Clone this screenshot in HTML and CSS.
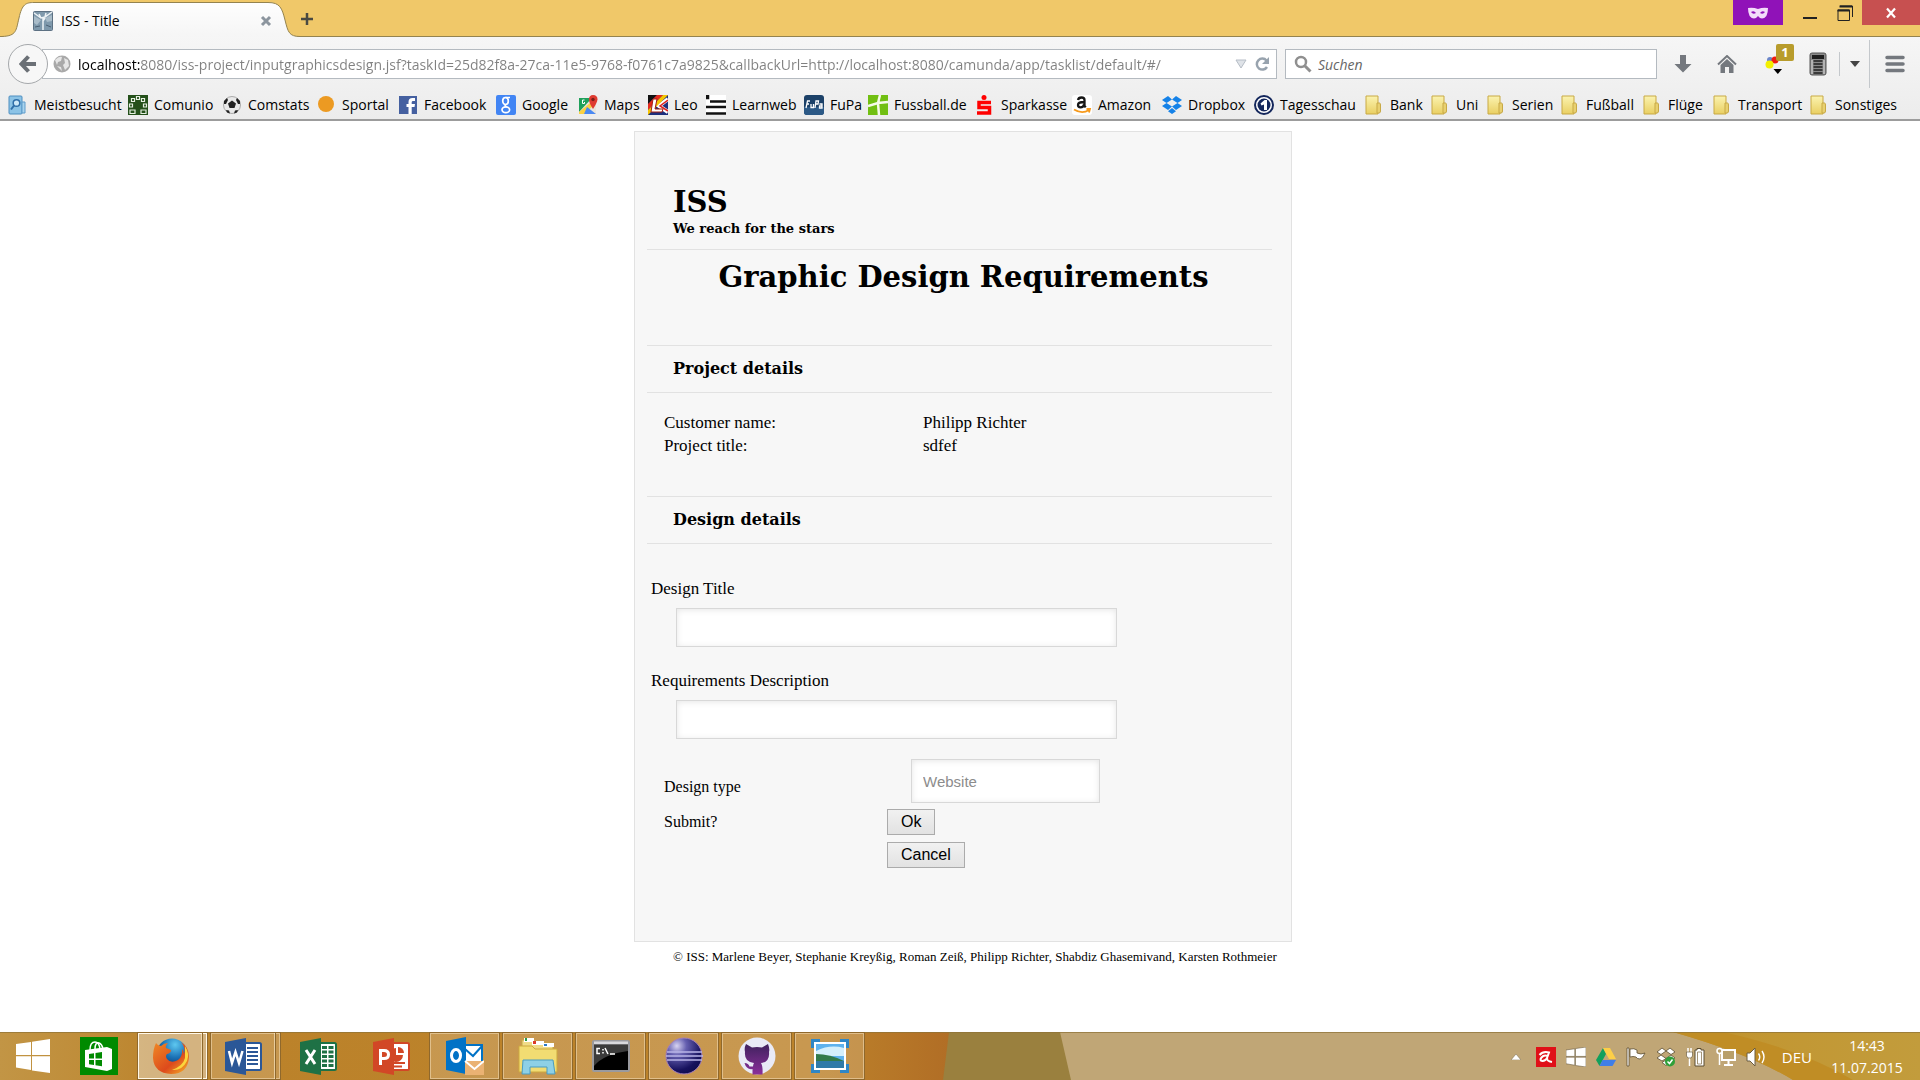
FILE: index.html
```
<!DOCTYPE html>
<html lang="de">
<head>
<meta charset="utf-8">
<title>ISS - Title</title>
<link rel="stylesheet" href="styles.css">
</head>
<body>
<svg class="defs" aria-hidden="true">
  <defs>
    <linearGradient id="folderFill" x1="0" y1="0" x2="0" y2="1"><stop offset="0" stop-color="#fbf3b0"/><stop offset="1" stop-color="#e9cf62"/></linearGradient>
    <linearGradient id="tabFill" x1="0" y1="0" x2="0" y2="1"><stop offset="0" stop-color="#fefefe"/><stop offset="1" stop-color="#f5f5f5"/></linearGradient>
    <radialGradient id="orb" cx=".3" cy=".22" r=".9"><stop offset="0" stop-color="#d8d4f2"/><stop offset=".3" stop-color="#655fb0"/><stop offset=".75" stop-color="#17125e"/><stop offset="1" stop-color="#0d0a48"/></radialGradient>
    <radialGradient id="globe" cx=".6" cy=".2" r=".8"><stop offset="0" stop-color="#5ec8f0"/><stop offset=".5" stop-color="#1c74b8"/><stop offset="1" stop-color="#0b2c66"/></radialGradient>
    <linearGradient id="fox" x1="0" y1="0" x2="1" y2="1"><stop offset="0" stop-color="#f08a24"/><stop offset=".6" stop-color="#dd4a1c"/><stop offset="1" stop-color="#f7b928"/></linearGradient>
    <linearGradient id="octo" x1="0" y1="0" x2="0" y2="1"><stop offset="0" stop-color="#40225e"/><stop offset="1" stop-color="#8a2f9a"/></linearGradient>
    <symbol id="folder" viewBox="0 0 18 20"><path d="M1 1h12v18H1z" fill="url(#folderFill)" stroke="#c8a945"/><path d="M12 8h2.500q1 0 1 2v6q0 2-1.500 2h-2z" fill="#e8d070" stroke="#c8a945"/></symbol>
    <symbol id="win" viewBox="0 0 34 34"><path d="M0 5 15 3v13H0zM16 2.700 34 0v16H16zM0 17.300h15V31L0 28.500zM16 17.300h18V34l-18-2.600z"/></symbol>
  </defs>
</svg>

<header class="chrome">
  <div class="titlebar">
    <div class="tab">
      <svg class="tab-shape" viewBox="0 0 300 37"><path d="M2 36.500C17 36 16 30 19 18 22 4 26 2.500 34 2.500H268C280 2.500 282 8 285 20 288 32 289 36.500 300 36.500V38H2z" fill="url(#tabFill)" stroke="#94834f"/></svg>
      <svg class="favicon" viewBox="0 0 20 20"><rect x=".5" y=".5" width="19" height="19" rx="1" fill="#7f99ac" stroke="#5d7183"/><path d="M1 5 8 9 4 14 1 12zM12 7l7-3v6l-5 1z" fill="#a9bcc9"/><path d="m1 2 7 5 4-1 7-5M6 3l2 4M13 2l-1 4M10 7v12M12 7l-2 3" fill="none" stroke="#eef3f6" stroke-width="1.500"/><path d="M2 16l5-1M13 14l5 2" stroke="#4b6073"/></svg>
      <span class="tab-title">ISS - Title</span>
      <button class="tab-close" type="button" aria-label="Tab schließen"><svg viewBox="0 0 12 12" width="12" height="12"><path d="m2 2 8 8M10 2l-8 8" stroke="#8c959e" stroke-width="3"/></svg></button>
    </div>
    <button class="new-tab" type="button" aria-label="Neuer Tab"><svg viewBox="0 0 14 14" width="14" height="14"><path d="M7 1v12M1 7h12" stroke="#4a4a42" stroke-width="2.500"/></svg></button>
    <div class="window-buttons">
      <span class="private"><svg viewBox="0 0 20 12" width="20" height="12"><path d="M0 1q5-1 10 1 5-2 10-1 0 10-6 10.500-2 0-4-2.500-2 2.500-4 2.500Q0 11 0 1z" fill="#f3dcfa"/><path d="M3 5q3-2 5 1-3 2-5-1zM17 5q-3-2-5 1 3 2 5-1z" fill="#9012b8"/></svg></span>
      <button type="button" aria-label="Minimieren"><svg viewBox="0 0 16 16" width="16" height="16"><path d="M1 13h14" stroke="#222" stroke-width="2"/></svg></button>
      <button type="button" aria-label="Verkleinern"><svg viewBox="0 0 16 16" width="16" height="16"><path d="M3 1h12.500v11M1 5h11.500v10.500H1z" fill="none" stroke="#222"/><path d="M2.500 1.500H15M.5 5.500h12" stroke="#222" stroke-width="2"/></svg></button>
      <button class="close" type="button" aria-label="Schließen"><svg viewBox="0 0 12 12" width="12" height="12"><path d="m2 1.500 8 9M10 1.500l-8 9" stroke="#fff" stroke-width="2.200"/></svg></button>
    </div>
  </div>

  <div class="navbar">
    <button class="back" type="button" aria-label="Zurück"><svg viewBox="0 0 18 18" width="18" height="18"><path d="M9.500 1.500 2.500 9l7 7.500M3 9h14" fill="none" stroke="#6b7076" stroke-width="4"/></svg></button>
    <div class="urlbar">
      <svg viewBox="0 0 18 18" width="18" height="18"><circle cx="9" cy="9" r="8.500" fill="#a9a9a9"/><path d="M2 5q4-4 7-3l-1 4-3 1-1 3zM11 3l4 2 1 6-4 4-2-5 2-2zM4 11l4 1 1 4z" fill="#e6e6e6"/></svg>
      <input class="url" type="text" aria-label="Adresse" value="localhost:8080/iss-project/inputgraphicsdesign.jsf?taskId=25d82f8a-27ca-11e5-9768-f0761c7a9825&amp;callbackUrl=http://localhost:8080/camunda/app/tasklist/default/#/">
      <svg viewBox="0 0 12 10" width="12" height="10"><path d="M1 1h10L6 9z" fill="#dfe3e8" stroke="#b6bdc6"/></svg>
      <svg viewBox="0 0 16 16" width="16" height="16"><path d="M12.500 4.500A5.500 5.500 0 1 0 13 11" fill="none" stroke="#98a3ae" stroke-width="2.500"/><path d="M15 1v7H8z" fill="#98a3ae"/></svg>
    </div>
    <div class="searchbar">
      <svg viewBox="0 0 18 18" width="18" height="18"><circle cx="7" cy="7" r="5" fill="none" stroke="#8f8f8f" stroke-width="2.500"/><path d="m11 11 5.500 5.500" stroke="#8f8f8f" stroke-width="3"/></svg>
      <input class="search" type="text" aria-label="Suchen" placeholder="Suchen">
    </div>
    <div class="tools">
      <button type="button" aria-label="Downloads"><svg viewBox="0 0 18 20" width="18" height="20"><path d="M6 1h6v9h5.500L9 18.500.5 10H6z" fill="#74787e"/></svg></button>
      <button type="button" aria-label="Startseite"><svg viewBox="0 0 20 18" width="20" height="18"><path d="m1 9.500 9-8.500 9 8.500" fill="none" stroke="#74787e" stroke-width="2"/><path d="m3.500 10 6.500-6 6.500 6v8H12v-6H8v6H3.500z" fill="#74787e"/></svg></button>
      <button class="addon" type="button" aria-label="Erweiterung"><svg viewBox="0 0 20 20" width="20" height="20"><circle cx="7" cy="6" r="3" fill="#6b86c9"/><circle cx="12" cy="6" r="3.500" fill="#f01d10"/><circle cx="6.500" cy="10.500" r="4" fill="#f3f000"/><path d="M10.500 15H19l-4.200 5z" fill="#000"/></svg><span class="count">1</span></button>
      <button type="button" aria-label="Leseliste"><svg viewBox="0 0 18 24" width="18" height="24"><rect x="1" y="1" width="16" height="22" rx="2" fill="#8a8a8a" stroke="#555"/><path d="M3 3h12v4H3z" fill="#1e1e1e"/><path d="M4.500 9h9M4.500 12h9M4.500 15h9M4.500 18h9M4.500 21h9" stroke="#222" stroke-width="1.500"/><path d="M3 8v14M15 8v14" stroke="#ddd"/></svg></button>
      <button class="split" type="button" aria-label="Mehr"><svg viewBox="0 0 10 6" width="10" height="6"><path d="M0 0h10L5 6z" fill="#444"/></svg></button>
      <button class="menu" type="button" aria-label="Menü"><svg viewBox="0 0 20 18" width="20" height="18"><path d="M2 2.500h16M2 9h16M2 15.500h16" stroke="#74787e" stroke-width="3.500" stroke-linecap="round"/></svg></button>
    </div>
  </div>

  <nav class="bookmarks" aria-label="Lesezeichen">
    <a href="#"><svg viewBox="0 0 20 20"><rect x="1" y="1" width="13" height="18" rx="1" fill="#8cc3e6" stroke="#4f8fc0"/><path d="M14 7h3v11h-3z" fill="#a9d4ee" stroke="#5e9ccb"/><circle cx="8.500" cy="8" r="3.300" fill="#cde8f8" stroke="#2f6ea8" stroke-width="1.500"/><path d="m6 10.500-3 4" stroke="#2f6ea8" stroke-width="2"/></svg>Meistbesucht</a>
    <a href="#"><svg viewBox="0 0 20 20"><path d="M0 0h20v20H0z" fill="#24501a"/><g fill="#24501a" stroke="#e4eee0" stroke-width="1.200"><path d="M8.500 1.500h3v3h-3zM3.500 3.500h3v3h-3zM13.500 3.500h3v3h-3zM1.500 9h3v3h-3zM15.500 9h3v3h-3zM2 15h5v3.500H2zM13 15h5v3.500h-5z"/></g></svg>Comunio</a>
    <a href="#"><svg viewBox="0 0 20 20"><circle cx="10" cy="10" r="8.500" fill="#e9e9e9" stroke="#aaa"/><path d="m10 5.500 4 3-1.500 4.500h-5L6 8.500zM2 6l3-3 1 2-2 4H2zM18 6l-3-3-1 2 2 4h2zM4 15l3 .500 1 3-3-1zM16 15l-3 .500-1 3 3-1z" fill="#222"/></svg>Comstats</a>
    <a href="#"><svg viewBox="0 0 20 20"><circle cx="10" cy="9" r="8" fill="#ec9a22"/></svg>Sportal</a>
    <a href="#"><svg viewBox="0 0 20 20"><path d="M1 1h18v18H1z" fill="#4560a0"/><path d="M10.500 19v-7H8.500V9h2V7q0-4 4-4h2.500v3h-2q-1.300 0-1.300 1.300V9H17l-.5 3h-2.800v7z" fill="#fff"/></svg>Facebook</a>
    <a href="#"><svg viewBox="0 0 20 20"><rect width="20" height="20" rx="2" fill="#4285f4"/><g fill="none" stroke="#fff" stroke-width="1.700"><ellipse cx="9.500" cy="6" rx="2.800" ry="3.500"/><path d="M9.500 2.500H14M10 9.500q-2 1 .500 2.500"/><ellipse cx="9.800" cy="14.800" rx="3.800" ry="2.900"/></g></svg>Google</a>
    <a href="#"><svg viewBox="0 0 20 20"><path d="M1 3h17v16H1z" fill="#e9e5dc"/><path d="M1 3h13L1 17z" fill="#1fa05a"/><path d="m1 17 11-9 3 3-9 8H1z" fill="#fbd142"/><path d="m9 12 9 7H6z" fill="#4a89f3"/><path d="M15 0q4.500 0 4.500 4.500Q19 8 15 14q-4-6-4-9.500Q11 0 15 0z" fill="#df3b31"/><circle cx="15" cy="4.500" r="1.700" fill="#7c1f1a"/><path d="M6.500 5H4.500v3.500h2V7" fill="none" stroke="#fff"/></svg>Maps</a>
    <a href="#"><svg viewBox="0 0 20 20"><path d="M0 0h20v20H0z" fill="#1d2f7d"/><path d="m20 4-9 7 9 6" stroke="#fff" stroke-width="4" fill="none"/><path d="m20 5-8 6 8 5" fill="none" stroke="#d22" stroke-width="1.500"/><path d="M0 0h9L0 9z" fill="#111"/><path d="M9 0h6L0 15V9z" fill="#e42a1d"/><path d="M15 0h5L0 20v-5z" fill="#f6c400"/><path d="m5 4-2 13h11l1-3H7l2-10z" fill="#fff" stroke="#a42015"/></svg>Leo</a>
    <a href="#"><svg viewBox="0 0 20 20"><path d="M0 0h20v20H0z" fill="#fff"/><path d="M0 0h2v3H0zM4 6.500h16M0 12h20M0 18.500h20" stroke="#111" stroke-width="2.500"/></svg>Learnweb</a>
    <a href="#"><svg viewBox="0 0 20 20"><rect width="20" height="20" rx="3" fill="#1c4168"/><path d="M0 12h20v5q0 3-3 3H3q-3 0-3-3z" fill="#2c5986"/><path d="M2 13 3.500 6H6M3 9h2M7 9v3.500h2.500V9M11 13l1-7h2.500l-.5 3h-2M15.500 9H18v4h-2.500v-2H18" fill="none" stroke="#fff" stroke-width="1.300"/></svg>FuPa</a>
    <a href="#"><svg viewBox="0 0 20 20"><path d="M0 0h20v20H0z" fill="#71bf12"/><path d="m12 0-2 8 1 12M0 11l10-3 10-1" fill="none" stroke="#f5fbe9" stroke-width="2.500"/></svg>Fussball.de</a>
    <a href="#"><svg viewBox="0 0 20 20"><circle cx="9" cy="2.500" r="2.500" fill="#f00"/><path d="M16 7.500H4v5h10.500v5.500H2" fill="none" stroke="#f00" stroke-width="3.500"/></svg>Sparkasse</a>
    <a href="#"><svg viewBox="0 0 20 20"><rect width="20" height="20" rx="3" fill="#fff"/><path d="M6 5q.500-2.500 3.500-2.500T12.500 5v6l1.300 1.300M12 7Q6 7 6 10q0 2.300 2.500 2.300 3 0 3.500-2.800" fill="none" stroke="#151515" stroke-width="2.300"/><path d="M2 14.500q8 5 15 .500M14.500 14h3.500l-1 3.500" fill="none" stroke="#f79a1c" stroke-width="1.800"/></svg>Amazon</a>
    <a href="#"><svg viewBox="0 0 20 20"><path d="m6 1 4 3.500L4.500 8 0 5zM14 1l-4 3.500L15.500 8 20 5zM0 11l4.500-3 5.500 3.500L6 15zM20 11l-4.500-3-5.500 3.500 4 3.500zM10 13l4 3.200L10 19l-4-2.800z" fill="#1582e8"/></svg>Dropbox</a>
    <a href="#"><svg viewBox="0 0 20 20"><circle cx="10" cy="10" r="9" fill="#fff" stroke="#14275c" stroke-width="2"/><circle cx="10" cy="10" r="6.500" fill="#14275c"/><path d="M6.500 8.500 10.500 5H13v10h-3V9.500l-2.500 1z" fill="#fff"/></svg>Tagesschau</a>
    <a href="#"><svg viewBox="0 0 18 20"><use href="#folder"/></svg>Bank</a>
    <a href="#"><svg viewBox="0 0 18 20"><use href="#folder"/></svg>Uni</a>
    <a href="#"><svg viewBox="0 0 18 20"><use href="#folder"/></svg>Serien</a>
    <a href="#"><svg viewBox="0 0 18 20"><use href="#folder"/></svg>Fußball</a>
    <a href="#"><svg viewBox="0 0 18 20"><use href="#folder"/></svg>Flüge</a>
    <a href="#"><svg viewBox="0 0 18 20"><use href="#folder"/></svg>Transport</a>
    <a href="#"><svg viewBox="0 0 18 20"><use href="#folder"/></svg>Sonstiges</a>
  </nav>
</header>

<main class="page">
  <div class="column">
    <form class="card">
      <div class="brand">
        <h1>ISS</h1>
        <p>We reach for the stars</p>
      </div>
      <h2 class="title">Graphic Design Requirements</h2>
      <h3 class="section">Project details</h3>
      <table class="details">
        <tr><th scope="row">Customer name:</th><td>Philipp Richter</td></tr>
        <tr><th scope="row">Project title:</th><td>sdfef</td></tr>
      </table>
      <h3 class="section">Design details</h3>
      <div class="fields">
        <div class="field"><label for="design-title">Design Title</label><input id="design-title" type="text"></div>
        <div class="field"><label for="requirements">Requirements Description</label><input id="requirements" type="text"></div>
      </div>
      <div class="choices">
        <label for="design-type">Design type</label>
        <select id="design-type"><option>Website</option></select>
        <span class="prompt">Submit?</span>
        <div class="actions"><button type="button">Ok</button><button type="button">Cancel</button></div>
      </div>
    </form>
    <footer>© ISS: Marlene Beyer, Stephanie Kreyßig, Roman Zeiß, Philipp Richter, Shabdiz Ghasemivand, Karsten Rothmeier</footer>
  </div>
</main>

<div class="taskbar">
  <svg class="wallpaper" viewBox="0 0 1920 48" preserveAspectRatio="none">
    <defs><linearGradient id="wood"><stop offset="0" stop-color="#c29545"/><stop offset=".1" stop-color="#bf8c38"/><stop offset=".18" stop-color="#bb822a"/><stop offset=".85" stop-color="#bd832b"/><stop offset="1" stop-color="#b06c25"/></linearGradient>
    <linearGradient id="gold"><stop offset="0" stop-color="#c0902c"/><stop offset=".4" stop-color="#c29733"/><stop offset="1" stop-color="#c29c3c"/></linearGradient></defs>
    <path d="M0 0h960v48H0z" fill="url(#wood)"/>
    <path d="M949 0h125v48H943z" fill="#9a803e"/>
    <path d="M1060 0h860v48H1071z" fill="#c0a676"/>
    <path d="M1673 0h247v48h-127Q1750 22 1673 0z" fill="url(#gold)"/>
    <path d="M1673 0h50q80 18 130 48h-60Q1750 22 1673 0z" fill="#c08d25"/>
    <path d="M0 .5h1920" stroke="#8d7238" stroke-opacity=".7"/>
  </svg>
  <div class="apps">
    <button class="start" type="button" aria-label="Start"><svg width="34" height="34" fill="#fff"><use href="#win"/></svg></button>
    <button class="store" type="button" aria-label="Store"><svg viewBox="0 0 38 38" width="38" height="38"><path d="M0 0h38v38H0z" fill="#008a00"/><path d="M10 13Q10 5 15 5q4 0 5 7M15 12q0-7 4-6 3 1 4 6" fill="none" stroke="#fff" stroke-width="1.500"/><path d="m5 13 22-3 5 2v20l-5 2-22-4z" fill="#fff"/><path d="m9 17 5-.7v5.200H9zM15.500 16l6.500-1v6.500h-6.500zM9 23h5v5l-5-.7zM15.500 23H22v6.200l-6.500-1z" fill="#008a00"/></svg></button>
    <button class="open active stacked" type="button" aria-label="Firefox"><svg viewBox="0 0 38 38" width="38" height="38"><circle cx="20" cy="17" r="15.500" fill="url(#globe)"/><path d="M4 6q2 3 5 3 3-3 7-3-3 3-2 5l5 2q0 3-4 4-2 2 0 5 4 5 11 1 5-4 4-11 2 2 2 5 2-6-3-12 8 5 8 15-1 17-18 17Q2 36 1 21 1 12 4 6z" fill="url(#fox)"/><path d="M33 9q5 8 2 15-5 10-15 9 11-4 13-12z" fill="#fbd53d"/></svg></button>
    <button class="open stacked" type="button" aria-label="Word"><svg viewBox="0 0 37 37" width="37" height="37"><rect x="18" y="5" width="18" height="27" rx="1.500" fill="#fff" stroke="#2b5797" stroke-width="2"/><path d="M22 10h11M22 14h11M22 18h11M22 22h11M22 26h11" stroke="#2b5797" stroke-width="2"/><path d="m0 4 21-4v37L0 33z" fill="#2b5797"/><path d="m4 13 3 12 3.500-11L14 25l3.500-12" fill="none" stroke="#fff" stroke-width="2.500"/></svg></button>
    <button type="button" aria-label="Excel"><svg viewBox="0 0 37 37" width="37" height="37"><rect x="18" y="5" width="18" height="27" rx="1.500" fill="#fff" stroke="#1e7145" stroke-width="2"/><path d="M22 9.500h5M28.500 9.500h5M22 14h5M28.500 14h5M22 18.500h5M28.500 18.500h5M22 23h5M28.500 23h5M22 27.500h5M28.500 27.500h5" stroke="#1e7145" stroke-width="3"/><path d="m0 4 21-4v37L0 33z" fill="#1e7145"/><path d="m6 12 9 14M15 12 6 26" stroke="#fff" stroke-width="3"/></svg></button>
    <button type="button" aria-label="PowerPoint"><svg viewBox="0 0 37 37" width="37" height="37"><rect x="18" y="5" width="18" height="27" rx="1.500" fill="#fff" stroke="#d24726" stroke-width="2"/><path d="M23 10v7h7a7 7 0 1 1-7-7z" fill="#d24726"/><path d="M25 9a6 6 0 0 1 6 6h-6z" fill="#d24726"/><path d="M21 25h11M21 28.500h8" stroke="#d24726" stroke-width="2"/><path d="m0 4 21-4v37L0 33z" fill="#d24726"/><path d="M7.500 27V12.500H11q4.500 0 4.500 4t-4.500 4H8" fill="none" stroke="#fff" stroke-width="3"/></svg></button>
    <button class="open" type="button" aria-label="Outlook"><svg viewBox="0 0 38 38" width="38" height="38"><path d="M19 8h17v17H19z" fill="#fff" stroke="#0072c6" stroke-width="2"/><path d="m19 12 8 7 9-10" fill="none" stroke="#0072c6" stroke-width="2"/><path d="m0 4 20-4v37L0 33z" fill="#0072c6"/><ellipse cx="10" cy="18.500" rx="4.500" ry="6" fill="none" stroke="#fff" stroke-width="3"/><path d="M19 24h19v14H19z" fill="#eab273"/><path d="m19 24 9.500 8 9.500-8" fill="none" stroke="#fff" stroke-width="2"/></svg></button>
    <button class="open" type="button" aria-label="Explorer"><svg viewBox="0 0 40 38" width="40" height="38"><path d="M4 3h12l2 3h17v8H4z" fill="#f0dc88" stroke="#c7a647"/><path d="M6 1h10v4H6zM14 4h12v4H14zM25 6h11v4H25z" fill="#fff"/><path d="M7 1h2v3H7z" fill="#2a9a4a"/><path d="M15 4h3v3h-3z" fill="#dd3a2a"/><path d="M26 7h3v2h-3z" fill="#2a7ac8"/><path d="M1 9h13l3 3h22v23H1z" fill="#f2dc72" stroke="#cda93f"/><path d="M5 23h30l2 14h-8v-7H12v7H4z" fill="#8ed0e6" stroke="#4a9cc0"/></svg></button>
    <button class="open" type="button" aria-label="Eingabeaufforderung"><svg viewBox="0 0 38 32" width="38" height="32"><rect x="1" y="1" width="36" height="30" rx="1" fill="#000" stroke="#9a9a9e" stroke-width="2"/><path d="M2 3h34" stroke="#d8d8dc" stroke-width="3"/><path d="M2 5h34v6Q12 14 2 26z" fill="#3b3b3b"/><path d="M8 8.500H5v5h3M11 9v1.500M11 12v1.500M13 8l3 6M18 14h5" fill="none" stroke="#fff" stroke-width="1.500"/></svg></button>
    <button class="open" type="button" aria-label="Eclipse"><svg viewBox="0 0 38 38" width="38" height="38"><circle cx="19" cy="19" r="18" fill="url(#orb)" stroke="#a680b8"/><path d="M2 15h35M1 19h37M2 23h35" stroke="#b9b5e8" stroke-width="1.500"/></svg></button>
    <button class="open" type="button" aria-label="GitHub"><svg viewBox="0 0 38 38" width="38" height="38"><circle cx="19" cy="19" r="18.500" fill="#e9eaf6"/><path d="m8 7 6 3.500q5-1 10 0L30 7q2 5 1 8 1 10-8 11 2 3 1.500 11.500h-10V32q-6 1-8-6 4 0 5 3.500h3.500q0-2 1-3.500Q6 25 7 15 6 11 8 7z" fill="url(#octo)"/></svg></button>
    <button class="open" type="button" aria-label="Snipping Tool"><svg viewBox="0 0 38 34" width="38" height="34"><path d="M0 0h9v9H0zM29 0h9v9h-9zM0 25h9v9H0zM29 25h9v9h-9z" fill="#2f86c6"/><path d="M3 3h32v28H3z" fill="#fff"/><path d="M5 5h28v24H5z" fill="#5eb2ee"/><path d="M5 12q14-7 28-3v8H5z" fill="#d5effc"/><path d="M5 15q14 0 28 7v2H5z" fill="#337a4a"/><path d="M5 22h28v7H5z" fill="#2f7aa8"/></svg></button>
  </div>
  <div class="tray">
    <svg viewBox="0 0 10 6" width="10" height="6"><path d="m5 0 5 6H0z" fill="#fff" stroke="#77684a" stroke-width=".5"/></svg>
    <svg viewBox="0 0 20 20" width="20" height="20"><path d="M0 0h20v20H0z" fill="#e01018"/><path d="M3.500 8Q7 4 13 5.500L11 11q-.5 3 5 4M11.500 9Q8 7.500 5.500 10.500T6.500 14q3 0 5-3.500" fill="none" stroke="#fff" stroke-width="2"/></svg>
    <svg width="20" height="20" fill="#fff" stroke="#6b5c40"><use href="#win"/></svg>
    <svg viewBox="0 0 20 20" width="20" height="20"><path d="M7 1 0 13l3.500 6L10 7z" fill="#12a05c"/><path d="M7 1h7l6 11h-7z" fill="#fdcf47"/><path d="M6.500 13H20l-3.500 6h-13z" fill="#3f7ee8"/></svg>
    <svg viewBox="0 0 20 20" width="20" height="20"><path d="M1 1h2v18H1zM4 2q4-1 7 1v3q4 2 8 0-2 5-5 6-3 0-4-2-3-1-6 0z" fill="#fff" stroke="#5b4d30" stroke-width=".8"/></svg>
    <svg viewBox="0 0 20 20" width="20" height="20"><path d="m6 1 4 3-5 3.500L1 5zM14 1l-4 3 5 3.500L19 5zM1 11l4-3 5 3.500L6 14zM19 11l-4-3-5 3.500 4 2.500zM10 13l4 2.500-4 3-4-3z" fill="#fff" stroke="#5b4d30" stroke-width=".8"/><circle cx="14" cy="14.500" r="5" fill="#2fa03a"/><path d="m11.500 14.500 2 2 3-4" fill="none" stroke="#fff" stroke-width="1.500"/></svg>
    <svg viewBox="0 0 20 20" width="20" height="20"><path d="M2 1v5M5 1v5M3.500 10v9" stroke="#fff" stroke-width="1.500"/><path d="M.5 5h6v4l-1.500 2H2L.5 9z" fill="#fff" stroke="#5b4d30" stroke-width=".6"/><path d="M11 1.500h4v1.500h3v16H9V3h2z" fill="#fff" stroke="#5b4d30"/><path d="M11.500 5h4v12h-4z" fill="#fff" stroke="#8b7a58" stroke-width=".8"/></svg>
    <svg viewBox="0 0 20 20" width="20" height="20"><path d="M6 3h13v10H6z" fill="#b9a06a" stroke="#fff" stroke-width="2"/><path d="M12.500 14v3M8 18h9" stroke="#fff" stroke-width="2"/><circle cx="3.500" cy="4" r="2.500" fill="#b9a06a" stroke="#fff" stroke-width="1.500"/><path d="M3.500 7v11" stroke="#fff" stroke-width="1.500"/></svg>
    <svg viewBox="0 0 20 20" width="20" height="20"><path d="M1 6h3l5-5v18l-5-5H1z" fill="#fff" stroke="#6b5c40"/><path d="M12.500 6.500q2.500 3.500 0 7M16 4q4 6 0 12" fill="none" stroke="#fff" stroke-width="1.400"/></svg>
    <span class="lang">DEU</span>
    <time class="clock" datetime="2015-07-11T14:43"><span>14:43</span><span>11.07.2015</span></time>
  </div>
</div>
</body>
</html>
```
FILE: styles.css
```
* { box-sizing: border-box; }

body {
  margin: 0;
  min-height: 100vh;
  display: flex;
  flex-direction: column;
  background: #fff;
  color: #000;
  font-family: "Open Sans", "Noto Sans", sans-serif;
  font-size: 14px;
}

h1, h2, h3, p { margin: 0; }
button { margin: 0; padding: 0; border: 0; background: none; font: inherit; color: inherit; }
svg { display: block; flex: none; }
.defs { position: absolute; width: 0; height: 0; }

/* Browser window */
.chrome { background: linear-gradient(#f6f6f6 36px, #ececec 100%); border-bottom: 2px solid #9c9c9c; }

.titlebar {
  display: flex;
  height: 37px;
  background: #f0c869;
  border-bottom: 1px solid #94834f;
}
.tab {
  position: relative;
  display: flex;
  align-items: center;
  width: 300px;
  height: 37px;
  padding: 4px 28px 0 33px;
}
.tab-shape { position: absolute; left: 0; top: 0; width: 300px; height: 37px; }
.favicon { position: relative; width: 20px; height: 20px; }
.tab-title { position: relative; flex: 1; margin-left: 8px; }
.tab-close { position: relative; }
.new-tab { padding: 2px 0 0; }
.window-buttons { display: flex; margin-left: auto; height: 25px; }
.window-buttons button, .private { display: grid; place-items: center; width: 35px; }
.window-buttons .private { width: 50px; margin-right: 9px; background: #9012b8; }
.window-buttons .close { width: 58px; background: #c75050; }

.navbar { display: flex; align-items: center; height: 53px; padding-left: 8px; }
.back {
  position: relative;
  display: grid;
  place-items: center;
  width: 40px;
  height: 40px;
  border: 1px solid #a5a8ab;
  border-radius: 50%;
  background: #f7f7f7;
}
.urlbar, .searchbar {
  display: flex;
  align-items: center;
  height: 30px;
  border: 1px solid #b4bac0;
  background: #fff;
}
.urlbar { flex: 1; gap: 7px; margin-left: -6px; padding: 0 6px 0 10px; }
.searchbar { width: 372px; margin-left: 8px; padding-left: 8px; gap: 6px; }
.url, .search { flex: 1; min-width: 0; padding: 1px 0 0; border: 0; outline: 0; font: inherit; }
.url {
  background: linear-gradient(90deg, #000 62px, #808080 62px);
  background-clip: text;
  -webkit-background-clip: text;
  -webkit-text-fill-color: transparent;
  color: #808080;
}
.search { background: none; }
.search::placeholder { color: #666; font-style: italic; opacity: 1; }

.tools { display: flex; align-items: center; width: 263px; height: 100%; }
.tools button { display: grid; place-items: center; width: 44px; height: 24px; }
.tools button:first-child { margin-left: 4px; }
.tools .addon { position: relative; width: 48px; }
.tools .addon + button { width: 42px; }
.count {
  position: absolute;
  left: 27px;
  top: -8px;
  width: 18px;
  border-radius: 2px;
  background: #b89c2c;
  color: #fff;
  font-size: 13px;
  font-weight: 700;
  line-height: 17px;
}
.tools .split { width: 30px; border-left: 1px solid #c4c8cc; }
.tools .menu { flex: 1; height: 48px; border-left: 1px solid #c4c8cc; }

.bookmarks {
  display: grid;
  grid-template-columns: 120fr 94fr 94fr 82fr 98fr 82fr 70fr 58fr 98fr 64fr 107fr 97fr 90fr 92fr 110fr 66fr 56fr 74fr 82fr 70fr 97fr 95fr;
  height: 29px;
  padding: 0 16px 0 8px;
}
.bookmarks a {
  display: flex;
  align-items: center;
  gap: 6px;
  min-width: 0;
  color: #000;
  text-decoration: none;
  white-space: nowrap;
}
.bookmarks svg { width: 20px; height: 20px; }

/* Form page */
.page { flex: 1; padding: 10px 0 8px 6px; font-family: Georgia, "Liberation Serif", serif; }
.column { max-width: 658px; margin: 0 auto; }
.card {
  padding: 53px 19px 73px 12px;
  border: 1px solid #e2e2e2;
  background: #f7f7f7;
}
.brand, .title, .section { font-family: Georgia, "DejaVu Serif", serif; }
.brand { padding: 0 26px 10px; border-bottom: 1px solid #e2e2e2; }
.brand h1 { font-size: 29px; line-height: 34px; }
.brand p { font-size: 13px; font-weight: 700; line-height: 20px; }
.title { padding: 7px 0 48px 8px; font-size: 29px; line-height: 40px; text-align: center; white-space: nowrap; }
.section {
  padding: 10px 26px;
  border: 1px solid #e2e2e2;
  border-width: 1px 0;
  font-size: 16px;
  line-height: 26px;
}
.details { width: 100%; margin: 18px 0 39px; padding-left: 17px; border-spacing: 0; font-size: 17px; line-height: 23px; }
.details th { width: 259px; padding: 0; font-weight: 400; text-align: left; }
.details td { padding: 0; }

.fields { display: grid; gap: 22px; padding: 33px 4px 20px; }
.field { display: grid; gap: 8px; font-size: 17px; line-height: 23px; }
.field input {
  width: 441px;
  height: 39px;
  margin-left: 25px;
  padding: 0 12px;
  font: inherit;
}
.field input, .choices select {
  border: 1px solid #d8d8d8;
  border-radius: 0;
  background: #fff;
  box-shadow: inset 0 1px 6px rgba(0, 0, 0, .1);
}
.choices {
  display: grid;
  grid-template-columns: 223px 1fr;
  row-gap: 6px;
  padding-left: 17px;
  font-size: 16px;
  line-height: 23px;
}
.choices label { align-self: end; padding-bottom: 5px; }
.choices .prompt { padding-top: 1px; }
.choices select {
  appearance: none;
  width: 189px;
  height: 44px;
  margin-left: 24px;
  padding: 0 11px;
  color: #8c8c8c;
  font: 15px "Liberation Sans", Arial, sans-serif;
}
.actions { display: grid; justify-items: start; gap: 7px; }
.actions button {
  height: 26px;
  padding: 0 13px;
  border: 1px solid #ababab;
  background: linear-gradient(#f1f1f1, #e2e2e2);
  font: 16px "Liberation Sans", Arial, sans-serif;
}
footer { margin: 7px 0 0 39px; font: 13px/16px "Liberation Serif", "Times New Roman", serif; white-space: nowrap; }

/* Desktop taskbar */
.taskbar { position: relative; display: flex; justify-content: space-between; height: 48px; }
.wallpaper { position: absolute; inset: 0; width: 100%; height: 100%; }
.apps, .tray { position: relative; display: flex; }
.apps { gap: 2px; }
.apps button { display: grid; place-items: center; width: 71px; height: 48px; }
.apps .start { width: 66px; }
.apps .store { width: 67px; padding-right: 5px; }
.apps .open {
  border: 1px solid #8f682c;
  background: rgba(214, 180, 130, .42);
  box-shadow: inset 0 0 0 1px rgba(255, 240, 210, .45);
}
.apps .stacked { position: relative; padding-right: 4px; }
.apps .stacked::after {
  content: "";
  position: absolute;
  top: 0;
  right: 4px;
  bottom: 0;
  border-right: 1px solid #8f682c;
  border-left: 1px solid rgba(255, 240, 210, .6);
}
.apps .active { background: rgba(228, 210, 180, .62); box-shadow: inset 0 0 0 1px #fff8e8; }
.tray { align-items: center; gap: 10px; padding: 2px 17px 0 0; color: #fff; font-size: 15px; }
.tray svg:first-child { margin-right: 5px; }
.lang { margin-left: 6px; }
.clock { display: grid; width: 72px; margin-left: 9px; font-size: 14px; line-height: 22px; text-align: center; }
```
